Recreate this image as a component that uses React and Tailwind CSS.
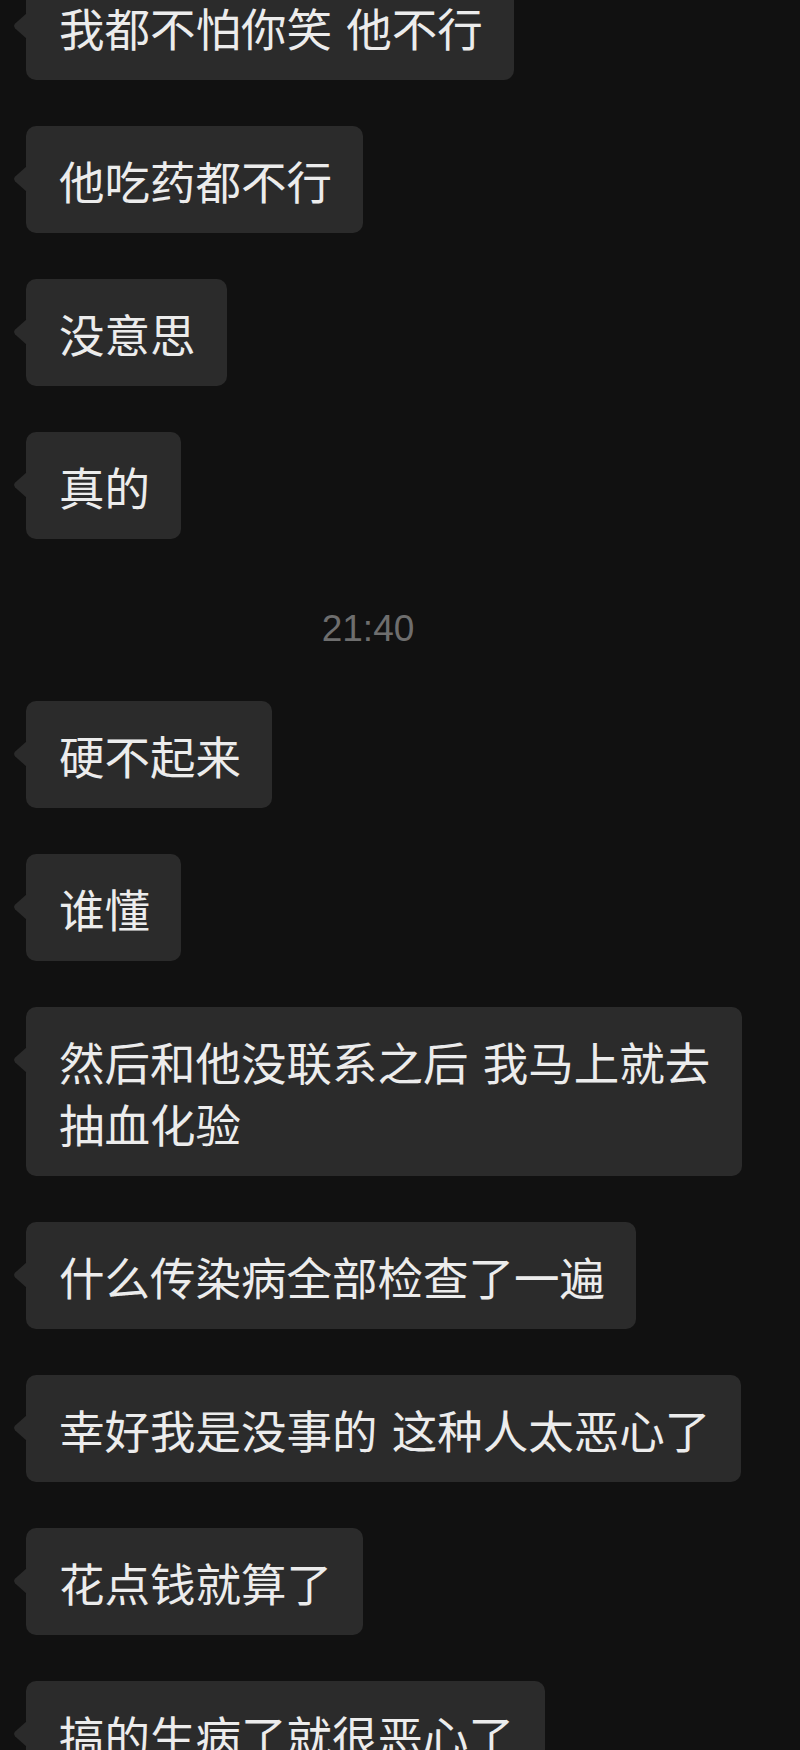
const messages = [
  '我都不怕你笑 他不行',
  '他吃药都不行',
  '没意思',
  '真的',
  { time: '21:40' },
  '硬不起来',
  '谁懂',
  '然后和他没联系之后 我马上就去抽血化验',
  '什么传染病全部检查了一遍',
  '幸好我是没事的 这种人太恶心了',
  '花点钱就算了',
  '搞的生病了就很恶心了',
];

function Bubble({ text }) {
  return (
    <div className="relative w-fit max-w-[716px] rounded-[10px] bg-[#2b2b2b] pt-[23px] pb-[22px] pl-[33px] pr-[31px] text-[45.5px] leading-[62px] text-[#ececec] [word-spacing:4px]">
      <svg
        className="absolute left-[-13px] top-[40px]"
        width="14"
        height="26"
        viewBox="0 0 14 26"
      >
        <path d="M14 0 L2.2 10.6 Q0 13 2.2 15.4 L14 26 Z" fill="#2b2b2b" />
      </svg>
      {text}
    </div>
  );
}

function TimeStamp({ time }) {
  return (
    <div className="flex h-[70px] justify-center pr-[90px] pt-[18px] font-['Liberation_Sans',Arial,sans-serif] text-[37px] leading-[52px] text-[#6e6e6e]">
      {time}
    </div>
  );
}

export default function App() {
  return (
    <div className="h-[1750px] w-[800px] overflow-hidden bg-[#111111] font-['Noto_Sans_CJK_SC','Noto_Sans',sans-serif]">
      <div className="mt-[-27px] flex flex-col gap-[46px] pl-[26px]">
        {messages.map((m, i) =>
          typeof m === 'string' ? <Bubble key={i} text={m} /> : <TimeStamp key={i} time={m.time} />
        )}
      </div>
    </div>
  );
}
